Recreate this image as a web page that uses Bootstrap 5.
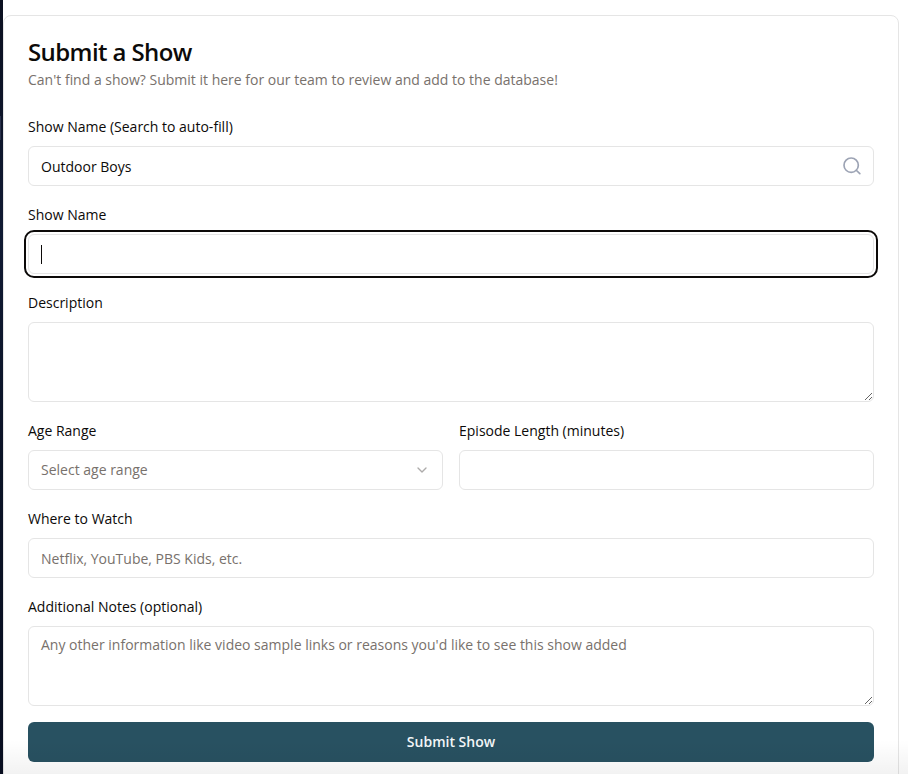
<!DOCTYPE html>
<html lang="en">
<head>
<meta charset="utf-8">
<meta name="viewport" content="width=device-width, initial-scale=1">
<title>Submit a Show</title>
<link href="https://cdn.jsdelivr.net/npm/bootstrap@5.3.0/dist/css/bootstrap.min.css" rel="stylesheet">
<style>
body{font-family:"Open Sans","Noto Sans",sans-serif;font-size:14px;line-height:20px;color:#0c0a09;background:#fff;height:774px;overflow:hidden}
.page-edge{width:3px;background:linear-gradient(#0b1020,#101a33 30%,#0b1326 60%,#080e20)}
.edge-tab{width:1px;height:24px;margin-top:116px;background:#29304a}
.show-card{width:896px;height:800px;margin-top:15px;border:1px solid #e5e5e5;border-radius:8px;padding:24px;background:#fff}
.show-title{font-size:24px;line-height:24px;font-weight:600;letter-spacing:-.6px;margin:0 0 6px}
.show-sub{color:#78716c;margin:0 0 24px;line-height:20px}
.form-label{line-height:26px;height:26px;margin:0 0 6px;display:block}
.form-control{height:40px;font-size:14px;line-height:20px;padding:9px 12px;border:1px solid #e5e5e5;border-radius:6px;color:#0c0a09;background-color:#fff}
.form-control::placeholder{color:#78716c;opacity:1}
textarea.form-control{height:80px;min-height:80px;padding-top:8px;display:block}
.active-box{outline:2px solid #0c0a09;outline-offset:2px}
.caret-line{width:1px;height:19px;background:#0c0a09}
.search-icon{right:12px;top:10px}
.form-control.pick{color:#78716c}
.submit-btn{height:40px;background:#285161;color:#f3f6f8;font-size:14px;font-weight:600;border-radius:6px;border:0;line-height:20px}
.fade-foot{height:34px;background:linear-gradient(transparent,rgba(0,0,0,.05));pointer-events:none;left:3px;z-index:5}
</style>
</head>
<body class="position-relative">
<div class="d-flex h-100 align-items-stretch overflow-hidden">
  <div class="page-edge flex-shrink-0 overflow-hidden"><div class="edge-tab"></div></div>
  <main class="show-card flex-shrink-0">
    <h1 class="show-title">Submit a Show</h1>
    <p class="show-sub">Can't find a show? Submit it here for our team to review and add to the database!</p>
    <form class="d-flex flex-column gap-3">
      <div>
        <label class="form-label" for="search">Show Name (Search to auto-fill)</label>
        <div class="position-relative">
          <input id="search" class="form-control" value="Outdoor Boys">
          <svg class="search-icon position-absolute" width="20" height="20" viewBox="0 0 24 24" fill="none" stroke="#9ca3b4" stroke-width="2" stroke-linecap="round" stroke-linejoin="round"><circle cx="11" cy="11" r="8.6"/><path d="m21.4 21.2-4.3-4.1"/></svg>
        </div>
      </div>
      <div>
        <label class="form-label">Show Name</label>
        <div class="form-control active-box d-flex align-items-center"><span class="caret-line"></span></div>
      </div>
      <div>
        <label class="form-label" for="desc">Description</label>
        <textarea id="desc" class="form-control"></textarea>
      </div>
      <div class="row gx-3">
        <div class="col-6">
          <label class="form-label">Age Range</label>
          <div class="form-control pick d-flex align-items-center justify-content-between">
            <span>Select age range</span>
            <svg width="16" height="16" viewBox="0 0 24 24" fill="none" stroke="#adabaa" stroke-width="2" stroke-linecap="round" stroke-linejoin="round"><path d="m6 9 6 6 6-6"/></svg>
          </div>
        </div>
        <div class="col-6">
          <label class="form-label" for="len">Episode Length (minutes)</label>
          <input id="len" class="form-control">
        </div>
      </div>
      <div>
        <label class="form-label" for="where">Where to Watch</label>
        <input id="where" class="form-control" placeholder="Netflix, YouTube, PBS Kids, etc.">
      </div>
      <div>
        <label class="form-label" for="notes">Additional Notes (optional)</label>
        <textarea id="notes" class="form-control" placeholder="Any other information like video sample links or reasons you'd like to see this show added"></textarea>
      </div>
      <button type="button" class="btn submit-btn w-100">Submit Show</button>
    </form>
  </main>
</div>
<div class="fade-foot position-absolute bottom-0 end-0"></div>
</body>
</html>
